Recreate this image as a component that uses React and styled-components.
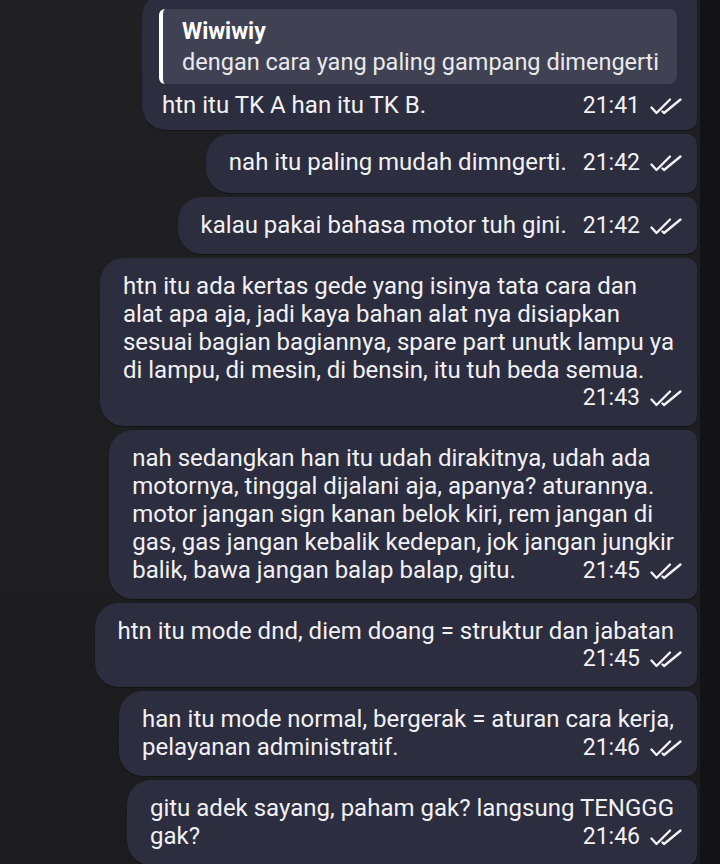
import React from 'react';
import styled, { createGlobalStyle } from 'styled-components';

const GlobalStyle = createGlobalStyle`
  html, body {
    margin: 0;
    padding: 0;
    background: #1e1e21;
  }
  body {
    font-family: Roboto, "Noto Sans", "Liberation Sans", sans-serif;
    -webkit-font-smoothing: antialiased;
  }
`;

const Screen = styled.div`
  display: flex;
  flex-direction: row;
  width: 720px;
  height: 864px;
  overflow: hidden;
  background: linear-gradient(180deg, #202023 0%, #1c1c1e 100%);
`;

const Chat = styled.div`
  flex: 1;
  display: flex;
  flex-direction: column;
  align-items: flex-end;
  gap: 4px;
  padding-right: 3px;
  margin-top: -7px;
`;

const EdgeStrip = styled.div`
  width: 20px;
  background: #131317;
`;

const Bubble = styled.div`
  display: flex;
  flex-direction: column;
  background: #2c2d3e;
  color: #f1f1f5;
  border-radius: 24px 10px 10px 24px;
  padding: ${p => p.$top || 14}px 15px ${p => p.$bottom || 14}px ${p => p.$left || 23}px;
  font-size: 24px;
  line-height: 28px;
  box-shadow: 0 1px 1px rgba(0, 0, 0, 0.35);
`;

const Quote = styled.div`
  display: flex;
  flex-direction: column;
  background: #404253;
  border-left: 4px solid #ffffff;
  border-radius: 6px 8px 8px 6px;
  padding: 8px 18px 7px 19px;
  margin: 0 5px 7px -3px;
  font-size: 23.5px;
  line-height: 30px;
`;

const QuoteName = styled.span`
  font-weight: 700;
  font-size: 23px;
  color: #ffffff;
`;

const QuoteText = styled.span`
  color: #e9e9ee;
  white-space: nowrap;
`;

const Line = styled.div`
  white-space: nowrap;
  padding-right: 8px;
`;

const LastRow = styled.div`
  display: flex;
  flex-direction: row;
  justify-content: space-between;
  align-items: baseline;
  gap: ${p => p.$gap || 16}px;
  white-space: nowrap;
`;

const MetaRow = styled.div`
  display: flex;
  justify-content: flex-end;
`;

const Meta = styled.span`
  display: inline-flex;
  align-items: center;
  gap: 10px;
  font-size: 23px;
  color: #f1f1f5;
  white-space: nowrap;
`;

const Checks = () => (
  <svg width="32" height="17" viewBox="0 0 32 17" fill="none" stroke="#f4f4f8"
       strokeWidth="2.3" strokeLinecap="round" strokeLinejoin="round">
    <path d="M1.5 9.5 L6.5 15 L20 1.5" />
    <path d="M12.5 13.5 L14 15 L30.5 1.5" />
  </svg>
);

const Time = ({ value }) => (
  <Meta>
    {value}
    <Checks />
  </Meta>
);

const Message = ({ lines, time, ownRow, quote, gap, left, top, bottom }) => {
  const body = ownRow ? lines : lines.slice(0, -1);
  const last = lines[lines.length - 1];
  return (
    <Bubble $left={left} $top={top} $bottom={bottom}>
      {quote && (
        <Quote>
          <QuoteName>{quote.name}</QuoteName>
          <QuoteText>{quote.text}</QuoteText>
        </Quote>
      )}
      {body.map((l, i) => <Line key={i}>{l}</Line>)}
      {ownRow ? (
        <MetaRow><Time value={time} /></MetaRow>
      ) : (
        <LastRow $gap={gap}>
          <span>{last}</span>
          <Time value={time} />
        </LastRow>
      )}
    </Bubble>
  );
};

const messages = [
  {
    quote: { name: 'Wiwiwiy', text: 'dengan cara yang paling gampang dimengerti' },
    lines: ['htn itu TK A han itu TK B.'],
    time: '21:41',
    left: 20,
    top: 16,
    bottom: 10,
  },
  { lines: ['nah itu paling mudah dimngerti.'], time: '21:42', gap: 16, bottom: 16 },
  { lines: ['kalau pakai bahasa motor tuh gini.'], time: '21:42', gap: 16 },
  {
    lines: [
      'htn itu ada kertas gede yang isinya tata cara dan',
      'alat apa aja, jadi kaya bahan alat nya disiapkan',
      'sesuai bagian bagiannya, spare part unutk lampu ya',
      'di lampu, di mesin, di bensin, itu tuh beda semua.',
    ],
    time: '21:43',
    ownRow: true,
  },
  {
    lines: [
      'nah sedangkan han itu udah dirakitnya, udah ada',
      'motornya, tinggal dijalani aja, apanya? aturannya.',
      'motor jangan sign kanan belok kiri, rem jangan di',
      'gas, gas jangan kebalik kedepan, jok jangan jungkir',
      'balik, bawa jangan balap balap, gitu.',
    ],
    time: '21:45',
  },
  {
    lines: ['htn itu mode dnd, diem doang = struktur dan jabatan'],
    time: '21:45',
    ownRow: true,
  },
  {
    lines: ['han itu mode normal, bergerak = aturan cara kerja,', 'pelayanan administratif.'],
    time: '21:46',
  },
  {
    lines: ['gitu adek sayang, paham gak? langsung TENGGG', 'gak?'],
    time: '21:46',
  },
];

export default function App() {
  return (
    <>
      <GlobalStyle />
      <Screen>
        <Chat>
          {messages.map((m, i) => <Message key={i} {...m} />)}
        </Chat>
        <EdgeStrip />
      </Screen>
    </>
  );
}
